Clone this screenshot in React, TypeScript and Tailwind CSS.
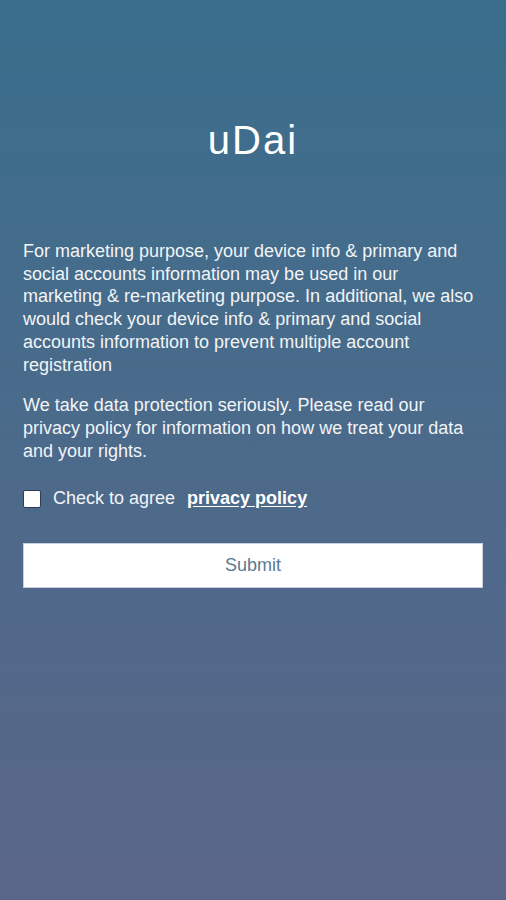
import React from 'react';

export default function App() {
  return (
    <div
      className="w-[506px] h-[900px] bg-gradient-to-b from-[#396e8c] to-[#5a6689] text-white flex flex-col"
      style={{ fontFamily: '"Liberation Sans", Arial, sans-serif' }}
    >
      {/* Title */}
      <h1 className="mt-[118px] text-center text-[40px] leading-[44px] tracking-[2px] font-normal text-white">uDai</h1>

      {/* Notice */}
      <div className="mt-[78px] pl-[23px] pr-[25px] text-[18px] leading-[22.7px] text-[#f2f4f6]">
        <p>
          For marketing purpose, your device info &amp; primary and social accounts information may be used in our
          marketing &amp; re-marketing purpose. In additional, we also would check your device info &amp; primary and
          social accounts information to prevent multiple account registration
        </p>
        <p className="mt-[18px]">
          We take data protection seriously. Please read our privacy policy for information on how we treat your data
          and your rights.
        </p>
      </div>

      {/* Agree */}
      <div className="mt-[23px] px-[23px] flex items-center">
        <span className="w-[18px] h-[18px] bg-white rounded-[2px] border border-[#2f3d55]" />
        <span className="ml-[12px] text-[18px] text-[#f2f4f6]">Check to agree</span>
        <span className="ml-[12px] text-[18px] font-bold underline underline-offset-2">privacy policy</span>
      </div>

      {/* Submit */}
      <div className="mt-[31px] px-[23px]">
        <button className="w-full h-[45px] bg-white text-[#5b7a90] text-[18px] border border-[#c9d2dc]">
          Submit
        </button>
      </div>
    </div>
  );
}
